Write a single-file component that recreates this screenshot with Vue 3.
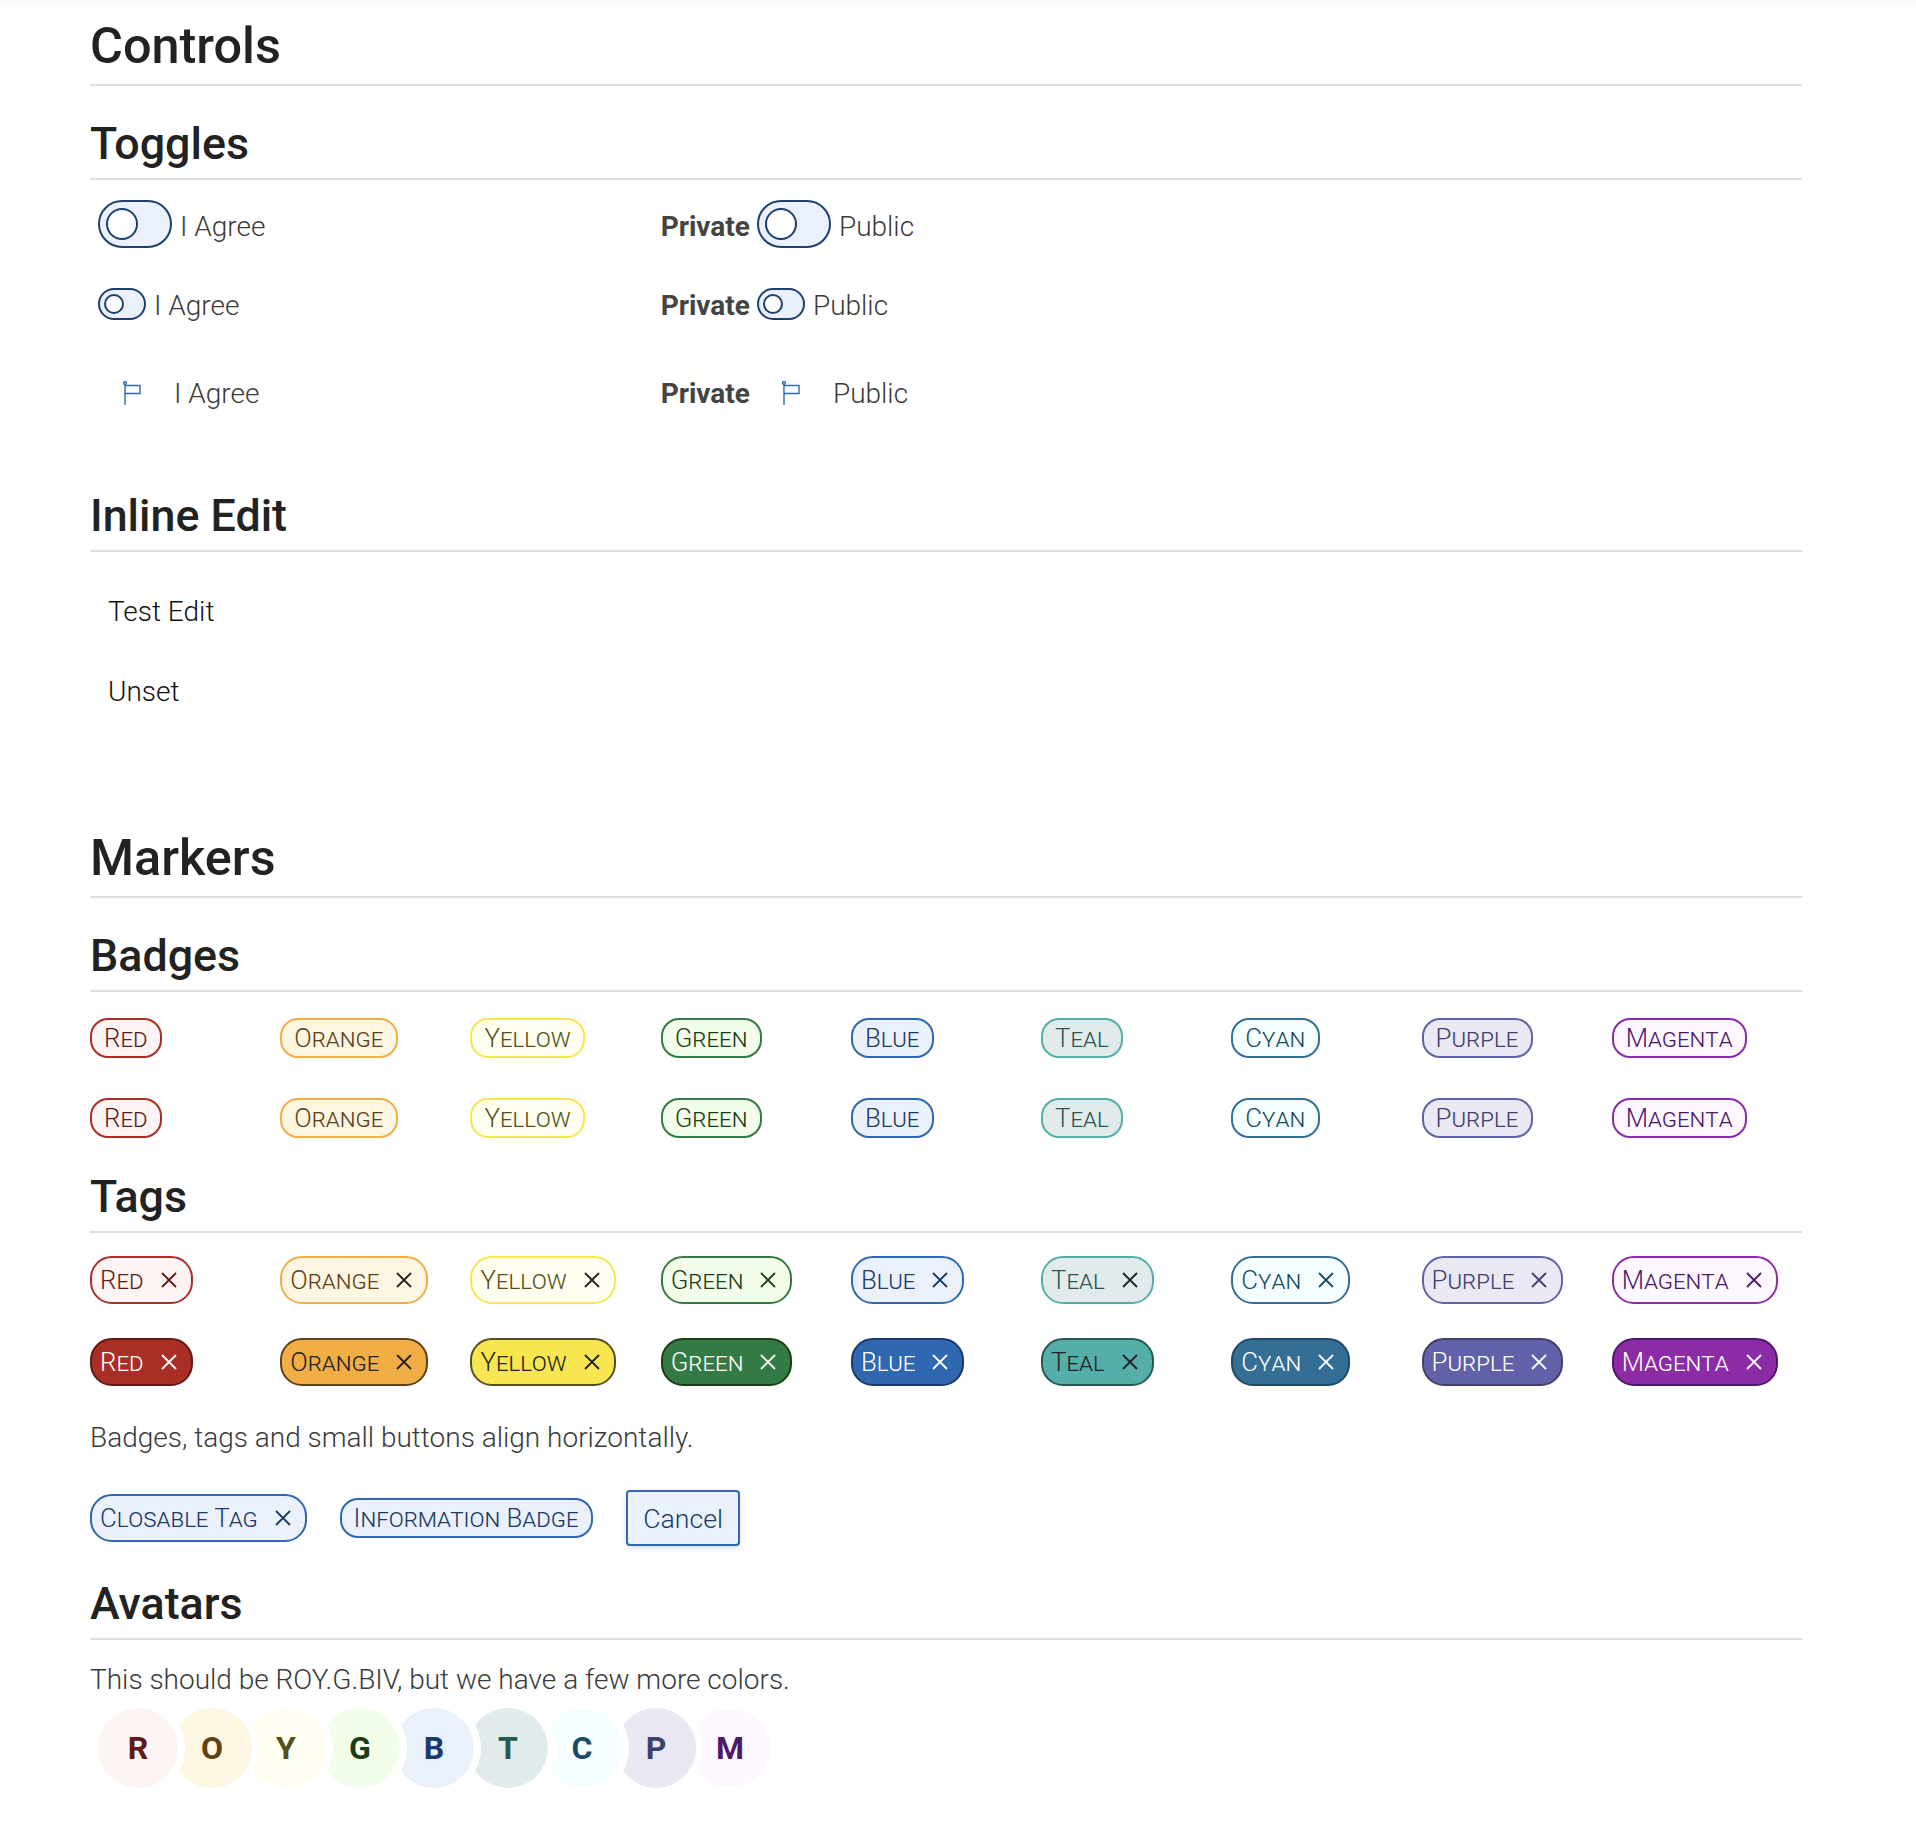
<script setup>
const colors = [
  { name: 'Red', cls: 'red' },
  { name: 'Orange', cls: 'orange' },
  { name: 'Yellow', cls: 'yellow' },
  { name: 'Green', cls: 'green' },
  { name: 'Blue', cls: 'blue' },
  { name: 'Teal', cls: 'teal' },
  { name: 'Cyan', cls: 'cyan' },
  { name: 'Purple', cls: 'purple' },
  { name: 'Magenta', cls: 'magenta' },
];
</script>

<template>
  <main class="page">
    <h1>Controls</h1>

    <h2 class="toggles-title">Toggles</h2>
    <div class="toggle-rows">
      <div class="toggle-row big">
        <label class="field">
          <span class="toggle"><span class="knob"></span></span>
          <span>I Agree</span>
        </label>
        <label class="field">
          <b>Private</b>
          <span class="toggle"><span class="knob"></span></span>
          <span>Public</span>
        </label>
      </div>
      <div class="toggle-row small">
        <label class="field">
          <span class="toggle"><span class="knob"></span></span>
          <span>I Agree</span>
        </label>
        <label class="field">
          <b>Private</b>
          <span class="toggle"><span class="knob"></span></span>
          <span>Public</span>
        </label>
      </div>
      <div class="toggle-row flags">
        <label class="field">
          <span class="flag-box">
            <svg width="20" height="24" viewBox="0 0 20 24" fill="none" stroke="#2f67b1" stroke-width="1.4">
              <circle cx="2" cy="2" r="1.4" />
              <path d="M2 3.5V24M2 4.5H17V12.5H2" />
            </svg>
          </span>
          <span>I Agree</span>
        </label>
        <label class="field">
          <b>Private</b>
          <span class="flag-box">
            <svg width="20" height="24" viewBox="0 0 20 24" fill="none" stroke="#2f67b1" stroke-width="1.4">
              <circle cx="2" cy="2" r="1.4" />
              <path d="M2 3.5V24M2 4.5H17V12.5H2" />
            </svg>
          </span>
          <span>Public</span>
        </label>
      </div>
    </div>

    <h2 class="inline-title">Inline Edit</h2>
    <div class="inline-edit">
      <div>Test Edit</div>
      <div>Unset</div>
    </div>

    <h1 class="markers-title">Markers</h1>

    <h2 class="badges-title">Badges</h2>
    <div class="color-grid badges">
      <span v-for="c in colors" :key="c.name" class="badge" :class="c.cls">{{ c.name }}</span>
      <span v-for="c in colors" :key="c.name + '2'" class="badge" :class="c.cls">{{ c.name }}</span>
    </div>

    <h2 class="tags-title">Tags</h2>
    <div class="color-grid tags">
      <span v-for="c in colors" :key="c.name" class="tag" :class="c.cls">
        {{ c.name }}
        <svg class="close" viewBox="0 0 18 18"><path d="M2 2L16 16M16 2L2 16" /></svg>
      </span>
      <span v-for="c in colors" :key="c.name + '2'" class="tag solid" :class="c.cls">
        {{ c.name }}
        <svg class="close" viewBox="0 0 18 18"><path d="M2 2L16 16M16 2L2 16" /></svg>
      </span>
    </div>

    <p class="note">Badges, tags and small buttons align horizontally.</p>
    <div class="inline-row">
      <span class="tag blue">
        Closable Tag
        <svg class="close" viewBox="0 0 18 18"><path d="M2 2L16 16M16 2L2 16" /></svg>
      </span>
      <span class="badge blue">Information Badge</span>
      <button class="btn">Cancel</button>
    </div>

    <h2 class="avatars-title">Avatars</h2>
    <p class="note-avatars">This should be ROY.G.BIV, but we have a few more colors.</p>
    <div class="avatars">
      <span
        v-for="(c, i) in colors"
        :key="c.name"
        class="avatar"
        :class="c.cls"
        :style="{ zIndex: colors.length - i }"
      >{{ c.name[0] }}</span>
    </div>
  </main>
</template>

<style scoped>
.page {
  box-sizing: border-box;
  width: 1916px;
  height: 1822px;
  padding: 0 114px 0 90px;
  background: linear-gradient(#fafafa, #fff 14px);
  font-family: Roboto, sans-serif;
  font-weight: 300;
  font-size: 28px;
  line-height: 40px;
  color: #3a3a3a;
  overflow: hidden;
}
h1,
h2 {
  margin: 0;
  font-weight: 500;
  color: #222;
  border-bottom: 2px solid #ddd;
}
h1 {
  font-size: 50.4px;
  line-height: 60px;
  padding-bottom: 8px;
  margin-top: 16px;
}
h2 {
  font-size: 44.8px;
  line-height: 48px;
  padding-bottom: 10px;
}
.page > h1:first-child {
  padding-top: 16px;
  margin-top: 0;
}
.toggles-title {
  margin-top: 34px;
}
.toggle-rows {
  margin-top: 20px;
}
.toggle-row {
  display: grid;
  grid-template-columns: repeat(3, 1fr);
}
.toggle-row .field:first-child {
  padding-left: 8px;
}
.field {
  display: flex;
  align-items: center;
  gap: 8px;
}
.field b {
  font-weight: 700;
  color: #444;
  margin-right: -1px;
}
.toggle {
  box-sizing: border-box;
  display: block;
  border: 2px solid #1d3f6e;
  background: #eaf1fb;
  border-radius: 24px;
  margin-bottom: 5px;
}
.knob {
  box-sizing: border-box;
  display: block;
  background: #fff;
  border: 2px solid #1d3f6e;
  border-radius: 50%;
}
.big .toggle {
  width: 74px;
  height: 48px;
  padding: 6px;
}
.big .knob {
  width: 32px;
  height: 32px;
}
.small {
  margin-top: 33px;
}
.small .toggle {
  width: 48px;
  height: 32px;
  padding: 4px;
}
.small .knob {
  width: 20px;
  height: 20px;
}
.flags {
  margin-top: 48px;
}
.flag-box {
  width: 68px;
  height: 24px;
  margin-bottom: 3px;
  display: flex;
  justify-content: center;
}
.flag-box svg {
  margin-left: 2px;
}
.inline-title {
  margin-top: 78px;
}
.inline-edit {
  display: flex;
  flex-direction: column;
  gap: 40px;
  margin-top: 40px;
  padding-left: 18px;
  color: #111;
}
.markers-title {
  margin-top: 116px;
}
.badges-title {
  margin-top: 34px;
}
.color-grid {
  display: grid;
  grid-template-columns: repeat(9, 1fr);
  justify-items: start;
  align-items: center;
}
.badges {
  margin-top: 26px;
  row-gap: 40px;
}
.badge,
.tag {
  box-sizing: border-box;
  display: inline-flex;
  align-items: center;
  border: 2px solid var(--line);
  background: var(--soft);
  color: var(--ink);
  font-variant: small-caps;
  font-size: 25.8px;
  font-weight: 300;
}
.badge {
  height: 40px;
  padding: 0 12.5px 0 12px;
  border-radius: 18px;
}
.tag {
  height: 48px;
  padding: 0 13px 0 8px;
  border-radius: 22px;
  gap: 16px;
}
.close {
  width: 18px;
  height: 18px;
  fill: none;
  stroke: currentColor;
  stroke-width: 1.8;
}
.tag.orange .close,
.tag.yellow .close,
.tag.teal .close {
  color: #222;
}
.tag.solid {
  background: var(--line);
  border-color: var(--ink);
  color: #fff;
}
.tag.solid.orange,
.tag.solid.yellow,
.tag.solid.teal {
  color: #222;
}
.red {
  --line: #a82e26;
  --soft: #fdf4f4;
  --ink: #611a16;
}
.orange {
  --line: #f1ae45;
  --soft: #fcf6e3;
  --ink: #604116;
}
.yellow {
  --line: #f7e64f;
  --soft: #fffff0;
  --ink: #544f1c;
}
.green {
  --line: #347a45;
  --soft: #f2feea;
  --ink: #1a3d16;
}
.blue {
  --line: #2f67b1;
  --soft: #eaf1fb;
  --ink: #1a3a6b;
}
.teal {
  --line: #55aea9;
  --soft: #e2ebeb;
  --ink: #295850;
}
.cyan {
  --line: #346e95;
  --soft: #f5ffff;
  --ink: #1d4a67;
}
.purple {
  --line: #6061a8;
  --soft: #e9e8f3;
  --ink: #413f6b;
}
.magenta {
  --line: #8c2ba6;
  --soft: #fdf8ff;
  --ink: #4d1868;
}
.tags-title {
  margin-top: 35px;
}
.tags {
  margin-top: 23px;
  row-gap: 34px;
}
.note {
  margin: 32px 0 0;
}
.inline-row {
  display: flex;
  align-items: center;
  gap: 33px;
  margin-top: 32px;
}
.btn {
  box-sizing: border-box;
  width: 114px;
  height: 56px;
  border: 2px solid #2f67b1;
  border-radius: 4px;
  background: #eaf1fb;
  color: #1a3a6b;
  font: 300 26.6px Roboto, sans-serif;
  box-shadow: 0 2px 6px rgba(0, 0, 0, 0.15);
  padding: 0;
}
.avatars-title {
  margin-top: 34px;
}
.note-avatars {
  margin: 20px 0 0;
}
.avatars {
  display: flex;
  margin-top: 8px;
  padding-left: 8px;
}
.avatar {
  width: 80px;
  height: 80px;
  flex: none;
  margin-right: -6px;
  border-radius: 50%;
  display: flex;
  align-items: center;
  justify-content: center;
  background: var(--soft);
  color: var(--ink);
  font-weight: 700;
  font-size: 32px;
  box-shadow: 0 0 0 7px #fff;
}
</style>
